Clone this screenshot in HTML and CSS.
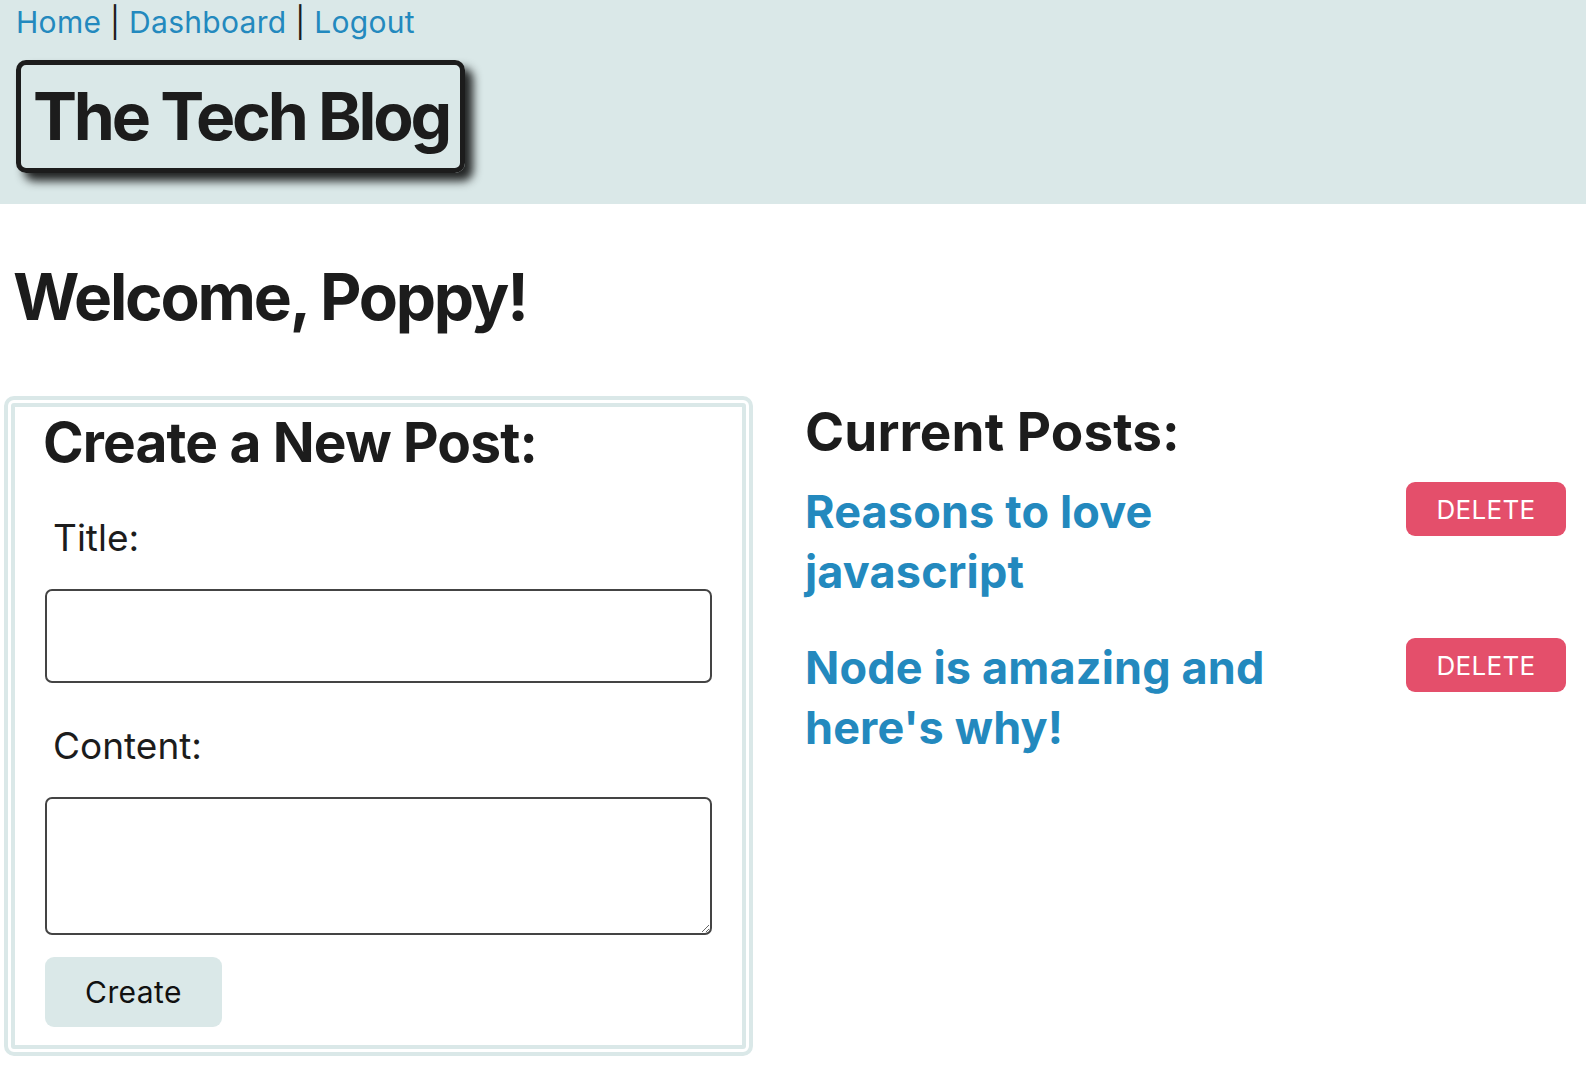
FILE: index.html
```html
<!DOCTYPE html>
<html lang="en">
<head>
<meta charset="utf-8">
<title>The Tech Blog</title>
<link rel="stylesheet" href="styles.css">
</head>
<body>
<header class="site-header">
  <nav class="nav"><a href="#">Home</a> | <a href="#">Dashboard</a> | <a href="#">Logout</a></nav>
  <div class="brand"><h1 class="brand-title">The Tech Blog</h1></div>
</header>
<main class="main">
  <h2 class="welcome">Welcome, Poppy!</h2>
  <div class="columns">
    <section class="card">
      <h3 class="card-title">Create a New Post:</h3>
      <form class="post-form">
        <label class="field-label" for="title">Title:</label>
        <input class="field-input" id="title" type="text">
        <label class="field-label" for="content">Content:</label>
        <textarea class="field-textarea" id="content"></textarea>
        <button class="create-btn" type="button">Create</button>
      </form>
    </section>
    <section class="posts">
      <h3 class="posts-title">Current Posts:</h3>
      <ul class="post-list">
        <li class="post-item"><a class="post-link" href="#">Reasons to love javascript</a><button class="delete-btn" type="button">DELETE</button></li>
        <li class="post-item"><a class="post-link" href="#">Node is amazing and here's why!</a><button class="delete-btn" type="button">DELETE</button></li>
      </ul>
    </section>
  </div>
</main>
</body>
</html>
```
FILE: styles.css
```css
* { box-sizing: border-box; }
html, body { margin: 0; padding: 0; background: #fff; }
body {
  font-family: Inter, "Noto Sans", "Liberation Sans", sans-serif;
  color: #1c1c1c;
}
a { color: #2389be; text-decoration: none; }

.site-header {
  background: #dae8e8;
  height: 204px;
  padding: 2px 0 0 16px;
}
.nav {
  font-size: 30px;
  line-height: 40px;
  color: #1c1c1c;
  letter-spacing: 0.3px;
}
.brand {
  display: inline-block;
  margin-top: 18px;
  border: 5px solid #1c1c1c;
  border-radius: 10px;
  box-shadow: 8px 8px 10px rgba(0,0,0,0.85);
  padding: 0 11px 0 12px;
}
.brand-title {
  margin: 0;
  font-size: 66px;
  line-height: 103px;
  font-weight: 700;
  letter-spacing: -3.2px;
}

.welcome {
  margin: 53px 0 0 13px;
  font-size: 64px;
  line-height: 80px;
  font-weight: 700;
  letter-spacing: -2.2px;
}

.columns {
  display: flex;
  align-items: flex-start;
  margin-top: 59px;
  padding: 0 20px 0 4px;
}
.card {
  flex: 0 0 749px;
  height: 660px;
  border: 11px double #dae8e8;
  border-radius: 10px;
  padding: 2px 30px 0 30px;
}
.card-title {
  margin: 0 0 0 -2px;
  font-size: 55px;
  line-height: 66px;
  font-weight: 700;
  letter-spacing: -0.85px;
}
.post-form {
  display: flex;
  flex-direction: column;
  align-items: flex-start;
}
.field-label {
  margin-top: 41px;
  padding-left: 8px;
  font-size: 37px;
  line-height: 44px;
}
.field-input, .field-textarea {
  width: 100%;
  margin-top: 29px;
  border: 2px solid #444;
  border-radius: 7px;
  font: inherit;
  background: #fff;
}
.field-input { height: 94px; }
.field-textarea { height: 138px; resize: both; }
.create-btn {
  margin-top: 22px;
  width: 177px;
  height: 70px;
  border: none;
  border-radius: 9px;
  background: #dae8e8;
  color: #111;
  font-family: inherit;
  font-size: 30px;
  letter-spacing: 0.4px;
}

.posts {
  flex: 1;
  margin-left: 52px;
  padding-top: 4px;
}
.posts-title {
  margin: 0;
  font-size: 53px;
  line-height: 64px;
  font-weight: 700;
  letter-spacing: 0.1px;
}
.post-list {
  list-style: none;
  margin: 18px 0 0;
  padding: 0;
  display: flex;
  flex-direction: column;
  gap: 36px;
}
.post-item {
  display: flex;
  justify-content: space-between;
  align-items: flex-start;
}
.post-link {
  flex: 0 1 500px;
  font-size: 45px;
  line-height: 60px;
  font-weight: 700;
  letter-spacing: 0.15px;
}
.delete-btn {
  width: 160px;
  height: 54px;
  border: none;
  border-radius: 9px;
  background: #e44f6b;
  color: #fff;
  font-family: inherit;
  font-size: 26px;
  letter-spacing: 0.3px;
}
```
